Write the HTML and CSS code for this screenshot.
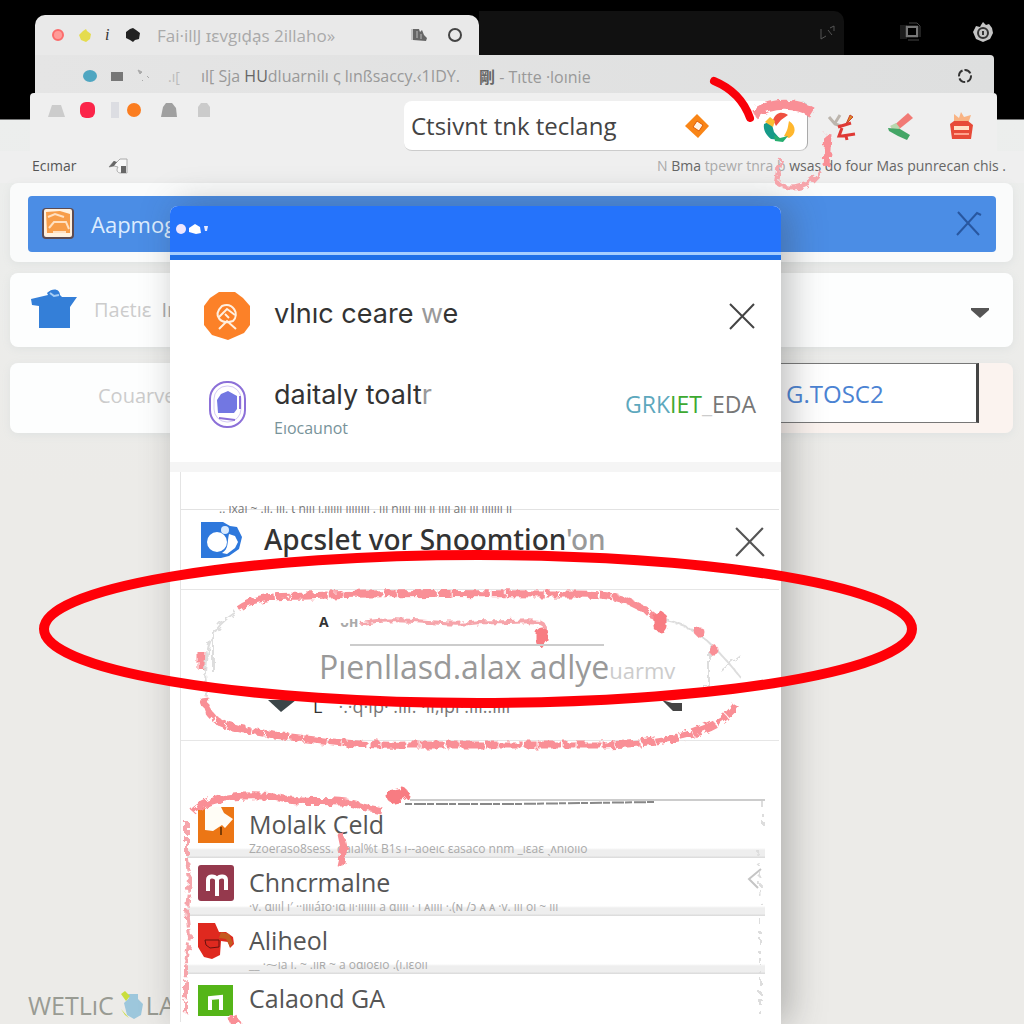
FILE: index.html
```html
<!DOCTYPE html>
<html lang="en">
<head>
<meta charset="utf-8">
<title>Browser extensions</title>
<link rel="stylesheet" href="styles.css">
</head>
<body>
<div class="desktop">
  <header class="browser">
    <div class="tabs">
      <div class="tab">
        <svg class="dot" viewBox="0 0 14 14"><circle cx="7" cy="7" r="5" fill="#ff9b98" stroke="#fb6c6c" stroke-width="2"/></svg>
        <svg class="dot" viewBox="0 0 14 14"><path d="M8 1l1 2 4 3-1 5-4 3-5-2-2-5 4-4z" fill="#e5dc4e"/></svg>
        <span class="info">i</span>
        <svg class="dot" viewBox="0 0 14 14"><path d="M7 0l3 2 4 3-1 6-4 1-2 2-3-2-4-2V4l4-3z" fill="#222"/></svg>
        <span class="tab-title">Fai·illJ ɪɛvgıd̩a̩s 2illaho»</span>
        <svg class="tab-mark" viewBox="0 0 18 14"><path d="M1 1h3v11H1z" fill="#c4c4c4"/><path d="M3 1h6l1 3 2-2 2 5 3 3-1 3-13-1z" fill="#666"/><path d="M7 3v7m4-4v5" stroke="#bbb"/></svg>
        <svg class="ring" viewBox="0 0 16 16"><circle cx="8" cy="8" r="6" fill="none" stroke="#444" stroke-width="2"/></svg>
      </div>
      <div class="tab-dark">
        <svg class="ring" viewBox="0 0 16 16"><path d="M1 4v10l5-3M8 5l4 5M10 3l4-2v5" fill="none" stroke="#555"/></svg>
      </div>
      <div class="system">
        <svg class="sys" viewBox="0 0 22 20"><path d="M0 3h7v14H0z" fill="#1c1c1c"/><path d="M6 4h12v11H6zM9 1h8l3 3v11M8 18h11" fill="none" stroke="#444" stroke-width="1"/><path d="M7 5h10v9H7z" fill="none" stroke="#777" stroke-width="2"/></svg>
        <svg class="sys" viewBox="0 0 22 20"><path d="M9 3l2-3 3 3 3-1 3 4 1 5-3 6-7 3-7-3-3-7 3-6 4 1z" fill="#c5c5c5"/><circle cx="11" cy="11" r="5" fill="none" stroke="#333" stroke-width="2"/><path d="M11 9v4" stroke="#333" stroke-width="2"/></svg>
      </div>
    </div>
    <div class="strip">
      <svg class="dot" viewBox="0 0 14 14"><ellipse cx="7" cy="7" rx="7" ry="6" fill="#4fa6c1"/></svg>
      <svg class="dot" viewBox="0 0 14 14"><path d="M1 3h12v9H1z" fill="#777"/></svg>
      <svg class="dot" viewBox="0 0 14 14"><path d="M1 1l4 2-2 2zM5 12l1-1M10 7l2 2" fill="#aaa" stroke="#aaa"/></svg>
      <span class="strip-mark">.ı[</span>
      <span class="strip-title">ıl[ Sja <b>HU</b>dluarnilı ς lınßsaccy.<span>‹1IDY.</span></span>
      <span class="strip-note"><b>剛</b> - Tıtte ·loınie</span>
      <svg class="ring" viewBox="0 0 16 16"><circle cx="8" cy="8" r="6" fill="none" stroke="#333" stroke-width="2" stroke-dasharray="7 2"/></svg>
    </div>
    <div class="toolbar">
      <div class="shapes">
        <svg class="shape" viewBox="0 0 18 16"><path d="M4 3h9l4 12H0z" fill="#ccc"/></svg>
        <svg class="shape" viewBox="0 0 18 16"><rect x="1" width="15" height="16" rx="6" fill="#fb2549"/></svg>
        <svg class="shape slim" viewBox="0 0 10 16"><path d="M1 0h8v16H1z" fill="#dcdde2"/></svg>
        <svg class="shape" viewBox="0 0 18 16"><rect x="2" y="1" width="14" height="14" rx="7" fill="#fb7d20"/></svg>
        <svg class="shape gap" viewBox="0 0 18 16"><path d="M6 1l6 0 4 5 1 9H1L3 5z" fill="#a0a0a0"/></svg>
        <svg class="shape gap" viewBox="0 0 18 16"><path d="M6 1h6l3 4v10H3V5z" fill="#cbcbcb"/></svg>
      </div>
      <div class="search">
        <input class="search-input" type="text" aria-label="Search" value="Ctsivnt tnk teclang">
        <svg class="tool" viewBox="0 0 30 30"><path d="M15 3l12 12-11 12L3 15z" fill="#f98517"/><path d="M15 10l6 4-4 6-6-4z" fill="#fff3e6" stroke="#df5b08"/></svg>
        <svg class="tool logo" viewBox="0 0 40 36"><path d="M13 12c3-8 9-9 15-5l-7 5-5 6z" fill="#ef5040"/><path d="M4 16l7-3 3 11 7 8-10-1c-5-4-8-9-7-15z" fill="#169a88"/><path d="M5 14l5-5 5 4-2 6z" fill="#f8bd32"/><path d="M29 13c8 5 7 14 0 17l-5-2c4-6 4-10 5-15z" fill="#ffb72d"/><path d="M14 27l6 3 8-2-5 6-8-1z" fill="#27ae70"/></svg>
      </div>
      <div class="extensions">
        <svg class="ext" viewBox="0 0 32 32"><path d="M4 7l6 7 6 2M15 5l-5 8" fill="none" stroke="#bcb5ad" stroke-width="3"/><path d="M25 5l3 2-7 7z" fill="#df8a25" stroke="#c9432b"/><path d="M13 17l13-4M17 18l-3 8h7l1 4M17 26l13-2" fill="none" stroke="#df3935" stroke-width="3"/></svg>
        <svg class="ext" viewBox="0 0 32 32"><path d="M23 3l5 5-15 12-7-2z" fill="#f17a75"/><path d="M5 16l6-3 4 5-5 3z" fill="#b8d8ae"/><path d="M3 18l12 1 10 6-3 5-9-4-9-5z" fill="#44a666"/></svg>
        <svg class="ext" viewBox="0 0 32 32"><path d="M9 4l5 4 2-6 3 5 7-2-3 9H9z" fill="#f9b383"/><path d="M5 14l4-3h14l5 4-2 14H7z" fill="#e74a38"/><path d="M9 16h15v4H9z" fill="#ffe0c8"/><path d="M9 24h15" stroke="#ffa18c" stroke-width="2"/></svg>
      </div>
    </div>
    <div class="bookmarks">
      <a class="bookmark" href="#">Ecımar</a>
      <svg class="folder" viewBox="0 0 22 18"><path d="M1 10l5-6 2 2 4-4h7v14h-6c-4 0-5-3-3-6L6 9z" fill="#f7f7f7" stroke="#aaa"/><path d="M1 10l5-6 3 1-3 4zM13 9h5v7h-5z" fill="#666"/></svg>
      <span class="notice"><span>N</span> Bma <span>tpewr tnra b</span> wsas do four Mas punrecan chis .</span>
    </div>
  </header>

  <main class="cards">
    <section class="card card-active">
      <div class="banner">
        <svg class="banner-icon" viewBox="0 0 36 34"><rect x="1" y="1" width="32" height="31" rx="4" fill="#5e4b50"/><rect x="3" y="2" width="28" height="28" rx="2" fill="#fff1df"/><path d="M5 5l14-1 10 3v19H6z" fill="#f79d49"/><path d="M7 10l7-3 9 3M8 21l5-6h12l3 7M12 25h13" fill="none" stroke="#ffe0c1" stroke-width="2"/></svg>
        <h2 class="banner-title">Aapmogi</h2>
        <button class="close" aria-label="Close banner"><svg viewBox="0 0 28 28"><path d="M3 2l9 10 12 13M2 25L22 3l4 2" fill="none" stroke="#2857a0" stroke-width="2"/></svg></button>
      </div>
    </section>
    <section class="card card-select">
      <svg class="pot" viewBox="0 0 48 42"><path d="M1 11l17-4-1-2c6-6 13-4 13 2l2 2h15l-7 10v21H9V18l-7-1z" fill="#347fd8"/><path d="M20 5l4 3 5-1" fill="none" stroke="#a7cef5" stroke-width="2"/></svg>
      <span class="faded">Пaєtıɛ</span><span class="faded-dark">In</span>
      <button class="drop" aria-label="Open list"><svg viewBox="0 0 18 12"><path d="M0 1h18v2l-9 8-9-8z" fill="#555"/></svg></button>
    </section>
    <section class="card card-field">
      <span class="faded">Couarve</span>
      <div class="code"><input class="code-input" type="text" aria-label="Code" value="G.TOSC2"></div>
    </section>
  </main>

  <footer class="brand">WETLıC <svg class="flask" viewBox="0 0 26 30"><path d="M8 4h10v5l5 5-2 11-7 4-7-4L4 13l5-5z" fill="#9dc7dc"/><path d="M1 4l4-3 5 5-4 5zM1 19l4 6 4 3" fill="#c9de3d"/></svg>LA</footer>

  <div class="dialog" role="dialog" aria-label="Extensions">
    <div class="dialog-bar">
      <svg class="bubbles" viewBox="0 0 34 14"><circle cx="5" cy="7" r="5" fill="#eee6ff"/><path d="M13 6l6-4 5 3 1 6-5 1-7-2z" fill="#fff"/><path d="M28 4l4 0-1 5-2 0z" fill="#e6eaff"/></svg>
    </div>
    <div class="accounts">
      <div class="account">
        <svg class="avatar" viewBox="0 0 48 50"><path d="M16 1h16l8 6 7 8 0 19-6 8-16 7-16-5-8-10V15l6-8z" fill="#fc8128"/><path d="M19 15c11-4 18 8 11 15-12 4-21-5-11-15zM16 26l8-8 8 6M22 23l4 4M16 38l8-8 9 8" fill="none" stroke="#fff0e0" stroke-width="2"/></svg>
        <h3 class="name">vlnıc ceare <span>w</span>e</h3>
        <button class="close" aria-label="Remove account"><svg viewBox="0 0 28 28"><path d="M2 2l24 24M2 27L26 2" fill="none" stroke="#444" stroke-width="2"/></svg></button>
      </div>
      <div class="account account-two">
        <svg class="avatar" viewBox="0 0 48 50"><rect x="7" y="3" width="35" height="45" rx="17" fill="#fff" stroke="#8c70d8" stroke-width="2"/><rect x="11" y="7" width="27" height="36" rx="13" fill="none" stroke="#d5caf5" stroke-width="1"/><path d="M14 21l4-6 7-3 9 5v13l-3 4H15z" fill="#7277e2"/><path d="M16 39l16 2M37 17v13" stroke="#8c70d8" stroke-width="2"/></svg>
        <div class="who"><h3 class="name">daitaly toalt<span>r</span></h3><p class="role">Eıocaunot</p></div>
        <span class="badge"><span class="b-blue">GRK</span><span class="b-green">IET</span><span class="b-pale">_</span>EDA</span>
      </div>
    </div>
    <div class="panel">
      <p class="fine fine-top">.. ıxaı ~ .ıı. ııı. ɩ nııı ı.ıııııı ıııııııı . ııı nıııı ıııı ıı ıııı aıı ııı ııııııı ıı</p>
      <div class="heading-row">
        <svg class="app" viewBox="0 0 42 38"><path d="M0 0h22l7 4 7 1 5 10-3 12-10 7-8 2H0z" fill="#2e78dc"/><circle cx="16" cy="20" r="10" fill="#fff"/><path d="M28 12l6 2 3 6-3 6-8 6-5-1c7-4 5-11 7-19z" fill="#fff"/><circle cx="24" cy="8" r="4" fill="#d8eaff"/></svg>
        <h2 class="heading">Apcslet vor Snoomtion<span>'on</span></h2>
        <button class="close close-large" aria-label="Close section"><svg viewBox="0 0 28 28"><path d="M1 1l26 26M1 27L26 1" fill="none" stroke="#555" stroke-width="2"/></svg></button>
      </div>
      <div class="featured">
        <p class="eyebrow">A <span>ᴗн</span></p>
        <p class="featured-title"><span>Pıenllasd.alax adlye</span><small>uarmv</small></p>
        <p class="featured-sub"><svg viewBox="0 0 30 14"><path d="M1 1h28L14 13z" fill="#3b4548"/></svg><span>L</span><i>·.·q·ıp· .ııı. ·ıı,ıpı·.ııı..ıııı</i><svg viewBox="0 0 30 14"><path d="M4 1l10 3 10 0v8h-9z" fill="#444"/></svg></p>
      </div>
      <ul class="list">
        <li class="item">
          <svg class="item-icon" viewBox="0 0 36 36"><path d="M0 0h36v36H0z" fill="#ec7615"/><path d="M7 0h16l3 6 9 6-8 9-3-3-9 6-8-1z" fill="#fffdf6"/><path d="M23 20v8" stroke="#7d3c05" stroke-width="2"/></svg>
          <div><a class="item-name" href="#">Molalk Celd</a><p class="fine">Zzoeraso8sess. oaıal%t B1s ı--aoeıc ɛasaco nnm _ıɛaɛ ˎʌnıoııo</p></div>
        </li>
        <li class="item">
          <svg class="item-icon" viewBox="0 0 36 36"><rect width="36" height="36" rx="3" fill="#95394d"/><path d="M10 26V15c0-4 6-5 9-1 3-4 9-3 9 1v10M19 13v18" fill="none" stroke="#fff" stroke-width="4"/></svg>
          <div><a class="item-name" href="#">Chncrmalne</a><p class="fine">·v. ɑıııl ı′ ··ııııáɪo·ıɑ ıı·ıııııı a ɑıııı · ı ᴀıııı ·.(ɴ /ɔ ᴀ ᴀ ·v. ııı oı ~ ııı</p></div>
          <svg class="chevron" viewBox="0 0 18 24"><path d="M14 1L2 11l9 9" fill="none" stroke="#c5c5c5" stroke-width="2"/></svg>
        </li>
        <li class="item">
          <svg class="item-icon" viewBox="0 0 36 36"><path d="M0 0h17l4 9 7 0 7 5 1 7-4 4-2-6-7-1-1 14-8 4-8-2-6-10z" fill="#df291f"/><path d="M23 9l8 2 4 9-3 4-4-8-7-1z" fill="#c45b20"/><path d="M7 17h14v7l-9 1-4-3z" fill="none" stroke="#68130f" stroke-width="1"/></svg>
          <div><a class="item-name" href="#">Aliheol</a><p class="fine">__ ·⁓ıa ı. ~ .ııʀ ~ a oɑıoɛıo .(ı.ıɛoıı</p></div>
        </li>
        <li class="item">
          <svg class="item-icon" viewBox="0 0 36 36"><path d="M0 4h35v31H0z" fill="#55b518"/><path d="M12 29V17l11-1v13" fill="none" stroke="#fff" stroke-width="4"/></svg>
          <div><a class="item-name" href="#">Calaond GA</a></div>
        </li>
      </ul>
    </div>
  </div>

  <svg class="marks" viewBox="0 0 1024 1024" aria-hidden="true">
    <defs><filter id="rough" x="-10%" y="-10%" width="120%" height="120%"><feTurbulence type="fractalNoise" baseFrequency="0.15" numOctaves="2" seed="4" result="noise"/><feDisplacementMap in="SourceGraphic" in2="noise" scale="8"/></filter></defs>
    <g class="crayon" filter="url(#rough)">
      <path d="M238 608c20-14 45-11 70-12 70-4 180-2 270-2 36 0 55 5 84 28" stroke-dasharray="38 2 13 1"/>
      <path d="M202 652v18M204 697c4 30 26 30 70 38 50 6 80 11 140 10h180c60 0 124-10 142-40" stroke-dasharray="24 2 12 1"/>
      <path class="pale" d="M236 612c-26 16-30 36-31 60l2 24M665 620c30 4 52 28 76 58M709 645v40h-7M213 632v40M720 670l20-15"/>
      <path class="thin" d="M360 623c50-8 80 5 120-1 38 2 64-6 65 6l-4 12"/>
      <path class="blob" d="M660 618v8M542 634v6"/>
      <path class="speck" d="M699 632h1M713 650h1"/>
      <path class="wide" d="M754 114c18-12 42-12 58-2"/>
      <path d="M828 134l-2 32" />
      <path class="thin" d="M820 171c-6 14-30 22-43 12l4-24"/>
      <path d="M193 812c15-17 65-19 91-13 26 6 55-2 78 8l20 4M341 834l3 14-4 18"/>
      <path class="blob" d="M393 796l9-2"/>
      <path class="thin" d="M187 822v38l3 20-3 30 3 28-4 25v52" stroke-dasharray="12 3 19 2"/>
      <path d="M230 1022l8-4"/>
      <path class="pale" d="M762 800v24M758 850l3 54M760 918v96" stroke-dasharray="7 6 3 4"/>
    </g>
    <path class="rule" d="M350 645h254"/>
    <path class="dashes" d="M405 804h110l140-2"/>
    <path class="rule" d="M410 800h355"/>
    <ellipse class="circle" cx="478" cy="629" rx="434" ry="74"/>
    <path class="arrow" d="M714 81c17 7 30 20 36 37"/>
  </svg>
</div>
</body>
</html>
```
FILE: styles.css
```css
* { box-sizing: border-box; }
body { margin: 0; font-family: "Open Sans", "Noto Sans", "Noto Sans CJK JP", sans-serif; color: #333; }
h2, h3, p, ul { margin: 0; padding: 0; font-weight: 400; }
svg { display: block; flex: none; }
button { border: 0; padding: 0; background: none; flex: none; }
input { border: 0; padding: 0; min-width: 0; background: none; font: inherit; outline: 0; }
a { color: inherit; text-decoration: none; }

.desktop { position: relative; display: flex; flex-direction: column; min-height: 100vh; overflow: hidden; background: linear-gradient(#000 119px, #eceeed 120px, #ecebe8 480px, #ecebe8); }

/* stacked browser windows */
.tabs { display: flex; align-items: flex-end; height: 55px; padding: 10px 30px 0 35px; }
.tab { display: flex; align-items: center; gap: 13px; width: 444px; height: 40px; padding: 0 16px; background: #e9e9e9; border-radius: 10px 10px 0 0; }
.dot { width: 14px; height: 14px; }
.info { width: 8px; font: italic 16px "Liberation Serif", serif; }
.tab-title { flex: 1; font-size: 17px; color: #aaa; white-space: nowrap; padding-left: 4px; }
.tab-mark { width: 18px; height: 14px; margin-right: 6px; }
.ring { width: 16px; height: 16px; }
.tab-dark { display: flex; justify-content: flex-end; align-items: center; flex: 1; height: 44px; padding-right: 8px; background: #111; border-radius: 0 10px 0 0; }
.system { display: flex; gap: 50px; width: 150px; height: 45px; padding: 12px 0 0 56px; }
.sys { width: 22px; height: 20px; }
.strip { display: flex; align-items: center; gap: 13px; height: 38px; margin: 0 30px 0 35px; padding: 4px 21px 0 48px; background: linear-gradient(90deg, #e5e5e5, #dedfdf); border-radius: 0 4px 0 0; white-space: nowrap; }
.strip-mark { width: 24px; padding-left: 4px; color: #bbb; font-size: 14px; }
.strip-title { width: 265px; font-size: 16px; color: #999; }
.strip-title b { color: #666; font-weight: 400; }
.strip-note { flex: 1; font-size: 16px; color: #999; }
.strip-note b { color: #666; }
.toolbar { display: flex; align-items: center; height: 58px; margin: 0 27px 0 30px; padding: 8px 20px 0 0; background: #efefef; border-radius: 4px 4px 0 0; }
.shapes { display: flex; align-items: center; flex: none; width: 374px; height: 18px; padding-left: 18px; gap: 13px; align-self: flex-start; }
.shape { width: 18px; height: 16px; }
.shape.slim { width: 10px; margin-right: -8px; }
.shape.gap { margin-left: 4px; }
.search { display: flex; align-items: center; flex: 1; min-width: 0; height: 50px; padding: 0 7px; background: #fff; border-radius: 8px; border-right: 1px solid #aaa; border-bottom: 1px solid #ccc; }
.search-input { flex: 1; width: 0; font-size: 24px; color: #444; }
.tool { width: 30px; height: 30px; }
.logo { width: 40px; height: 36px; margin-left: 48px; }
.extensions { display: flex; gap: 28px; margin-left: 17px; }
.ext { width: 32px; height: 32px; }
.bookmarks { display: flex; align-items: center; gap: 32px; height: 32px; padding: 0 18px 2px 32px; background: #efefef; font-size: 14px; line-height: 20px; }
.bookmark { color: #555; }
.folder { width: 22px; height: 18px; }
.notice { margin-left: auto; font-size: 14px; color: #666; white-space: nowrap; }
.notice span { color: #aaa; }

/* page cards behind the dialog */
.cards { display: flex; flex-direction: column; padding: 0 11px 0 10px; }
.card { display: flex; align-items: center; background: #fdfefe; border-radius: 8px; box-shadow: 0 2px 8px #dfe2e1; }
.card-active { height: 79px; padding: 2px 17px 0 18px; background: #fafbfb; }
.banner { display: flex; align-items: center; flex: 1; height: 56px; padding: 0 13px; background: #4b8de5; border-radius: 4px; }
.banner-icon { width: 36px; height: 34px; }
.banner-title { flex: 1; margin-left: 14px; font-size: 22px; color: #dcecff; }
.close { width: 28px; height: 28px; }
.close-large { width: 30px; height: 30px; margin-top: 2px; }
.card-select { height: 74px; margin-top: 11px; padding: 0 24px 2px 20px; }
.pot { width: 48px; height: 42px; margin-right: 16px; }
.faded { font-size: 20px; color: #ccc; }
.faded-dark { flex: 1; font-size: 20px; color: #aaa; margin-left: 10px; }
.drop { width: 18px; height: 12px; margin-top: 8px; }
.card-field { height: 70px; margin-top: 16px; padding: 0 34px 10px 88px; background: linear-gradient(90deg, #fdfefe 76%, #fbf3ef 77%); }
.card-field .faded { padding-top: 4px; }
.code { display: flex; align-items: center; width: 218px; height: 60px; margin-left: auto; padding-left: 24px; background: #fff; border: 1px solid #777; border-right: 3px solid #444; }
.code-input { width: 150px; color: #4b83d3; font-size: 24px; }
.brand { display: flex; align-items: center; margin-top: auto; padding: 0 0 4px 28px; font-size: 25px; line-height: 30px; color: #999b93; }
.flask { width: 26px; height: 30px; margin-left: 6px; }

/* dialog over the page */
.dialog { position: absolute; inset: 206px 243px 0 170px; background: #fff; border-radius: 8px 8px 0 0; box-shadow: 8px 0 36px rgba(60, 60, 60, .35); }
.dialog-bar { display: flex; align-items: center; height: 46px; padding-left: 6px; background: #2573fb; border-radius: 8px 8px 0 0; }
.bubbles { width: 34px; height: 14px; }
.accounts { height: 220px; padding: 27px 25px 0 32px; border-top: 3px solid #a4ceff; border-bottom: 10px solid #f5f5f5; background: linear-gradient(#1e70e8 5px, #fff 5px); }
.account { display: flex; align-items: center; height: 68px; }
.account-two { margin-top: 20px; }
.avatar { width: 50px; height: 50px; margin-right: 22px; }
.name { flex: 1; padding-bottom: 4px; font: 27px/30px Inter, sans-serif; color: #333; }
.name span { color: #999; }
.who { flex: 1; padding-top: 10px; }
.role { font-size: 16px; line-height: 22px; color: #78939a; margin-top: 3px; }
.badge { font-size: 23px; color: #777; }
.b-blue { color: #5da8bd; }
.b-green { color: #3da931; }
.b-pale { color: #ccc; }
.panel { margin: 0 2px 0 10px; border-left: 1px solid #e4e4e4; }
.fine { height: 10px; font-size: 12px; line-height: 10px; color: #aaa; white-space: nowrap; }
.fine-top { height: 38px; padding: 33px 0 0 38px; border-bottom: 1px solid #e2e2e2; line-height: 7px; color: #777; }
.heading-row { display: flex; align-items: center; height: 80px; padding: 0 14px 18px 20px; border-bottom: 1px solid #e6e6e6; }
.app { width: 42px; height: 38px; }
.heading { flex: 1; margin-left: 21px; padding-bottom: 4px; font: 500 28px "Noto Sans", sans-serif; color: #333; white-space: nowrap; }
.heading span { color: #999; }
.featured { height: 151px; padding: 22px 0 0 138px; border-bottom: 1px solid #e6e6e6; }
.eyebrow { font-size: 14px; line-height: 20px; font-weight: 700; color: #333; }
.eyebrow span { color: #aaa; margin-left: 8px; }
.featured-title { margin-top: 15px; font: 32px/40px "Open Sans", sans-serif; color: #999; white-space: nowrap; }
.featured-title small { font-size: 22px; color: #ccc; }
.featured-sub { display: flex; align-items: center; gap: 16px; margin: 5px 0 0 -52px; font-size: 18px; line-height: 22px; }
.featured-sub svg { width: 30px; height: 14px; }
.featured-sub i { width: 304px; color: #777; font-style: normal; }
.list { list-style: none; padding: 59px 14px 0 6px; }
.item { display: flex; align-items: flex-start; height: 58px; padding: 7px 0 0 11px; background: linear-gradient(#fff 48px, #eee 50px, #eee 56px, #ddd 57px); }
.item:last-child { background: #fff; height: 48px; }
.item-icon { width: 36px; height: 36px; margin-right: 15px; }
.item div { flex: 1; min-width: 0; }
.item-name { display: block; font-size: 25px; line-height: 34px; padding-bottom: 3px; color: #555; white-space: nowrap; }
.chevron { width: 18px; height: 24px; margin-top: 3px; }

/* hand-drawn notes */
.marks { position: absolute; inset: 0; width: 100%; pointer-events: none; fill: none; }
.crayon { stroke: #f98f96; stroke-width: 7; stroke-linejoin: round; }
.thin { stroke-width: 4; stroke: #f6a5ab; }
.wide { stroke-width: 10; }
.pale { stroke-width: 2; stroke: #ddd; }
.blob { stroke-width: 13; stroke-linecap: round; stroke: #f87c82; }
.speck { stroke-width: 9; stroke-linecap: round; }
.rule { stroke: #ccc; stroke-width: 2; }
.dashes { stroke: #888; stroke-width: 2; stroke-dasharray: 7 2 12 1; }
.circle { stroke: #ff0008; stroke-width: 10; }
.arrow { stroke: #f90009; stroke-width: 8; stroke-linecap: round; }
```
